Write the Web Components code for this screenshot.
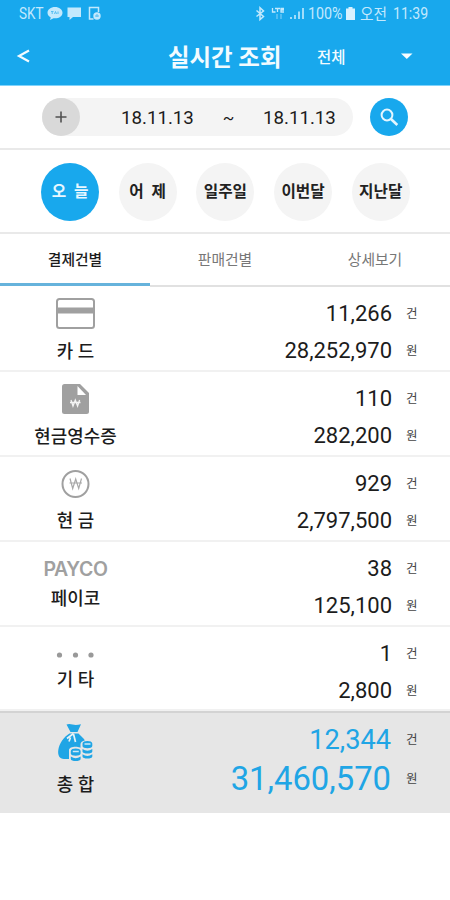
<!DOCTYPE html>
<html lang="ko">
<head>
<meta charset="utf-8">
<title>실시간 조회</title>
<style>
html,body{margin:0;background:#fff}
body{width:450px;height:900px;overflow:hidden;font-family:Roboto,"Noto Sans CJK KR",sans-serif;color:#1c1c1c}
</style>
</head>
<body>
<sales-app></sales-app>
<script>
const define=(name,html)=>customElements.define(name,class extends HTMLElement{
  connectedCallback(){
    if(this.shadowRoot)return;
    const t=document.createElement('template');
    t.innerHTML=(typeof html==='function'?html(this):html).trim();
    this.attachShadow({mode:'open'}).append(t.content.cloneNode(true));
  }
});

define('status-bar',`
<style>
:host{display:flex;height:28px;align-items:center;box-sizing:border-box;padding:0 22px 0 19px;color:#c3e9fd;font-size:16px;line-height:28px;white-space:nowrap}
span{display:block;flex:none}
i{display:block;font-style:normal;transform-origin:0 50%;width:max-content}
svg{display:block;flex:none}
</style>
<span style="width:28px"><i style="transform:scaleX(.84)">SKT</i></span>
<svg width="55" height="28" viewBox="0 0 55 28" fill="#c3e9fd"><path d="M8 7c-4.200 0-7.500 2.500-7.500 5.700 0 2 1.300 3.700 3.300 4.700L3 20l3.500-1.800c5 .7 9-2 9-5.500C15.500 9.500 12.200 7 8 7z"/><path d="M4 11.500h2.500M5.200 11.500v2.500M7.500 14l1-2.500 1 2.500M11 11.500V14" stroke="#55bdf1" fill="none"/><path d="M20.500 7.500h13.500v9.500h-8l-3.500 3v-3h-2z"/><path d="M48 7.500h-5.500v11.500h4M48 7.500h3.500V12" fill="none" stroke="#c3e9fd" stroke-width="1.500"/><circle cx="50" cy="16" r="3.700"/><path d="M48 16h4M50 14v3" stroke="#55bdf1" fill="none"/></svg>
<svg style="margin-left:auto" width="54" height="28" viewBox="0 0 54 28" fill="none" stroke="#c3e9fd"><path d="M2.500 10.500l7 6-3.500 3V7.800L9.500 11l-7 5.500" stroke-width="1.500"/><path d="M18.500 8v4h3M21 8.500h5M23.500 8.500V12M30 8.500h-3V12h3M27 10h3" stroke-width="1.300"/><path d="M23 14v5M27 14v5" stroke-width="1.200" opacity=".55"/><path d="M37 17v2M41 15v4M45 11.500V19M49 8v11" stroke-width="1.600"/></svg>
<span style="width:36px"><i style="transform:scaleX(.89)">100%</i></span>
<svg width="16" height="28" viewBox="0 0 16 28" fill="#d8f1ff"><path d="M4.500 7h4v1.500H11V20H2V8.500h2.500z"/></svg>
<span style="width:33px"><i style="transform:translateY(1px) scaleX(.92)">오전</i></span>
<span style="width:35px"><i style="transform:scaleX(.88)">11:39</i></span>`);

define('title-bar',`
<style>
:host{display:grid;grid-template-columns:155px 140px 79px 76px;height:57px;align-items:center;color:#f2fbff;line-height:57px}
svg{display:block}
h1{margin:0;font-size:23.400px;font-weight:700;padding-left:13px;white-space:nowrap;line-height:60px;height:57px}
b{font-size:15.500px;font-weight:500;padding-left:22px;height:57px;line-height:60px}
</style>
<svg width="60" height="57" viewBox="0 0 60 57"><path d="M29 22.500L19 28l10 5.500" fill="none" stroke="#f2fbff" stroke-width="2.200"/></svg>
<h1>실시간 조회</h1><b>전체</b>
<svg width="60" height="57" viewBox="0 0 60 57"><path d="M27 25.500h11.500l-5.700 5.500z" fill="#f8fdff"/></svg>`);

define('date-filter',`
<style>
:host{display:flex;height:62px;align-items:center;padding-left:42px}
.range{width:311px;height:38px;border-radius:19px;background:#f4f4f4;display:grid;grid-template-columns:79px 73px 69px 90px;align-items:center;font-size:18.700px;line-height:40px;white-space:nowrap}
.plus{width:38px;height:38px;border-radius:50%;background:#d9d9d9}
.range>span{height:38px}
.tilde{text-align:center;font-size:17px}
.go{margin-left:17px;width:38px;height:38px;border-radius:50%;background:#18a8ed}
svg{display:block}
</style>
<div class="range"><svg class="plus" viewBox="0 0 38 38"><path d="M13.500 19h11M19 13.500v11" stroke="#505050" stroke-width="1.600"/></svg><span>18.11.13</span><span class="tilde">~</span><span>18.11.13</span></div>
<svg class="go" viewBox="0 0 38 38" fill="none" stroke="#e4f6ff"><circle cx="17" cy="17" r="5.400" stroke-width="2"/><path d="M21 21l6.300 6" stroke-width="2.600"/></svg>`);

define('day-button',`
<style>
:host{display:block;width:58px;height:58px;border-radius:50%;background:#f4f4f4;text-align:center;font-size:15.700px;font-weight:700;line-height:58px;color:#222}
:host([active]){background:#18a8ed;color:#e8f7ff}
span{display:block;white-space:pre}
</style><span><slot></slot></span>`);

define('day-picker',`
<style>:host{display:flex;height:83px;box-sizing:border-box;gap:19.700px;padding:13px 0 0 41px}</style><slot></slot>`);

define('tab-item',`
<style>
:host{display:block;flex:1;box-sizing:border-box;height:53px;text-align:center;font-size:14.800px;line-height:53px;color:#777;border-bottom:2px solid #e1e1e1}
:host([active]){color:#1c1c1c;font-weight:500;border-bottom:3px solid #66b3dc;height:52px}
</style><slot></slot>`);
define('tab-strip',`<style>:host{display:flex;height:53px}</style><slot></slot>`);

const icons={
card:`<rect x="12" y="10" width="37" height="29" rx="2.500" fill="none" stroke="#a0a0a0" stroke-width="2"/><path d="M12 21.500h37" stroke="#a0a0a0" stroke-width="6"/>`,
receipt:`<path d="M19.500 10h15.500l9 9v18.500a2.500 2.500 0 0 1-2.500 2.500h-22a2.500 2.500 0 0 1-2.500-2.500v-25a2.500 2.500 0 0 1 2.500-2.500z" fill="#a0a0a0"/><path d="M32.500 12v9h8.500z" fill="#fff"/><path d="M26 26l2 6 2.300-6 2.300 6 2-6M25 28.500h10.500" fill="none" stroke="#f4f4f4" stroke-width="1.300"/>`,
cash:`<circle cx="30.500" cy="25" r="13" fill="none" stroke="#a0a0a0" stroke-width="2"/><path d="M25 19.500l2.700 10 3-9.500 3 9.500 2.800-10M24.500 24h12.500" fill="none" stroke="#a8a8a8" stroke-width="1.200"/>`,
dots:`<g fill="#999"><circle cx="14.500" cy="26" r="2.600"/><circle cx="30.500" cy="26" r="2.600"/><circle cx="46" cy="26" r="2.600"/></g>`,
bag:`<g fill="#20a5e5"><path d="M21.500 12.500q2.500-1 6 0t8.500-.3L32.500 20h-7z"/><path d="M24.500 21.500h9l5 5q3 3 4 7v13.500H19c-4.500 0-6.500-4-5.700-9 1-7 5.500-13 11.200-16.500z"/></g><path d="M28.500 21.500l-6.500 5M28.500 22l2 8M25.500 25.500l-1.500 4" stroke="#e6f2f7" stroke-width="1.700" fill="none"/><path d="M24 38c0-4.500 13-4.500 13 0v12H24zM35.500 32.500c0-6 14-6 14 0v17h-14z" fill="#e6e6e6"/><g fill="#20a5e5"><path d="M37.500 31.500c0-3.300 9.800-3.300 9.800 0v2.500c0 3-9.800 3-9.800 0zM37.500 37q4.900 3.300 9.800 0v2.500c0 2.800-9.800 2.800-9.800 0zM37.500 42.300q4.900 3.300 9.800 0v2.200c0 2.800-9.800 2.800-9.800 0z"/><path d="M25.800 39c0-3.300 9.800-3.300 9.800 0v2.500c0 3-9.800 3-9.800 0zM25.800 44.500q4.900 3.300 9.800 0V47c0 2.800-9.800 2.800-9.800 0z"/></g><path d="M39.500 32h6M27.800 39.500h6" stroke="#cdeaf7" stroke-width="1.300"/>`
};

define('pay-row',el=>`
<style>
:host{display:grid;grid-template-columns:151px 241px 58px;grid-template-rows:26px 37px;box-sizing:border-box;height:85px;padding-top:14px;border-bottom:2px solid #f1f1f1;line-height:26px;white-space:nowrap}
.id{grid-row:1/3;display:grid;grid-template-rows:37px 30px;justify-items:center}
:host([icon=cash]) .id{grid-template-rows:36px 30px}
:host([icon=payco]) .id{grid-template-rows:29px 30px}
:host([icon=dots]) .id{grid-template-rows:25px 30px}
:host([icon=dots]){height:84px}
svg{display:block;width:61px;height:52px;margin-top:-12px}
.brand{font:600 19.500px/27px Inter,sans-serif;color:#a0a0a0;letter-spacing:-.45px}
.label{font-size:17.900px;font-weight:500;line-height:28px;white-space:nowrap}
.n{font-size:22px;text-align:right;line-height:26px}
.n2{line-height:48px}
.u{font-size:12.500px;padding-left:14px;line-height:25px;color:#444}
.u2{line-height:47px}
:host([total]){background:#e6e6e6;border-top:2px solid #d3d3d3;border-bottom:0;height:102px;grid-template-rows:32px 44px;padding-top:11px}
:host([total]) .id{grid-template-rows:47px 30px}
:host([total]) svg{margin-top:-12px}
:host([total]) .n{color:#20a5e5;font-size:27.200px;line-height:33px;padding-right:1px}
:host([total]) .n2{font-size:32.800px;line-height:47px}
:host([total]) .u{line-height:31px}
:host([total]) .u2{line-height:45px}
</style>
<div class="id">${el.getAttribute('icon')==='payco'?'<span class="brand">PAYCO</span>':`<svg viewBox="0 0 61 52">${icons[el.getAttribute('icon')]}</svg>`}<span class="label"><slot></slot></span></div>
<div class="n">${el.getAttribute('count')}</div><div class="u">건</div>
<div class="n n2">${el.getAttribute('amount')}</div><div class="u u2">원</div>`);

define('sales-app',`
<style>
:host{display:block;width:450px;height:900px;background:#fff}
header{background:#18a8ed;height:85px}
.line{height:2px;background:#e9e9e9}
.glow{height:1px;background:#80d3fb}
</style>
<header><status-bar></status-bar><title-bar></title-bar></header>
<div class="glow"></div>
<date-filter></date-filter>
<div class="line"></div>
<day-picker><day-button active>오  늘</day-button><day-button>어  제</day-button><day-button>일주일</day-button><day-button>이번달</day-button><day-button>지난달</day-button></day-picker>
<div class="line" style="margin-top:-1px"></div>
<tab-strip><tab-item active>결제건별</tab-item><tab-item>판매건별</tab-item><tab-item>상세보기</tab-item></tab-strip>
<pay-row icon="card" count="11,266" amount="28,252,970">카 드</pay-row>
<pay-row icon="receipt" count="110" amount="282,200">현금영수증</pay-row>
<pay-row icon="cash" count="929" amount="2,797,500">현 금</pay-row>
<pay-row icon="payco" count="38" amount="125,100">페이코</pay-row>
<pay-row icon="dots" count="1" amount="2,800">기 타</pay-row>
<pay-row total icon="bag" count="12,344" amount="31,460,570">총 합</pay-row>`);
</script>
</body>
</html>
